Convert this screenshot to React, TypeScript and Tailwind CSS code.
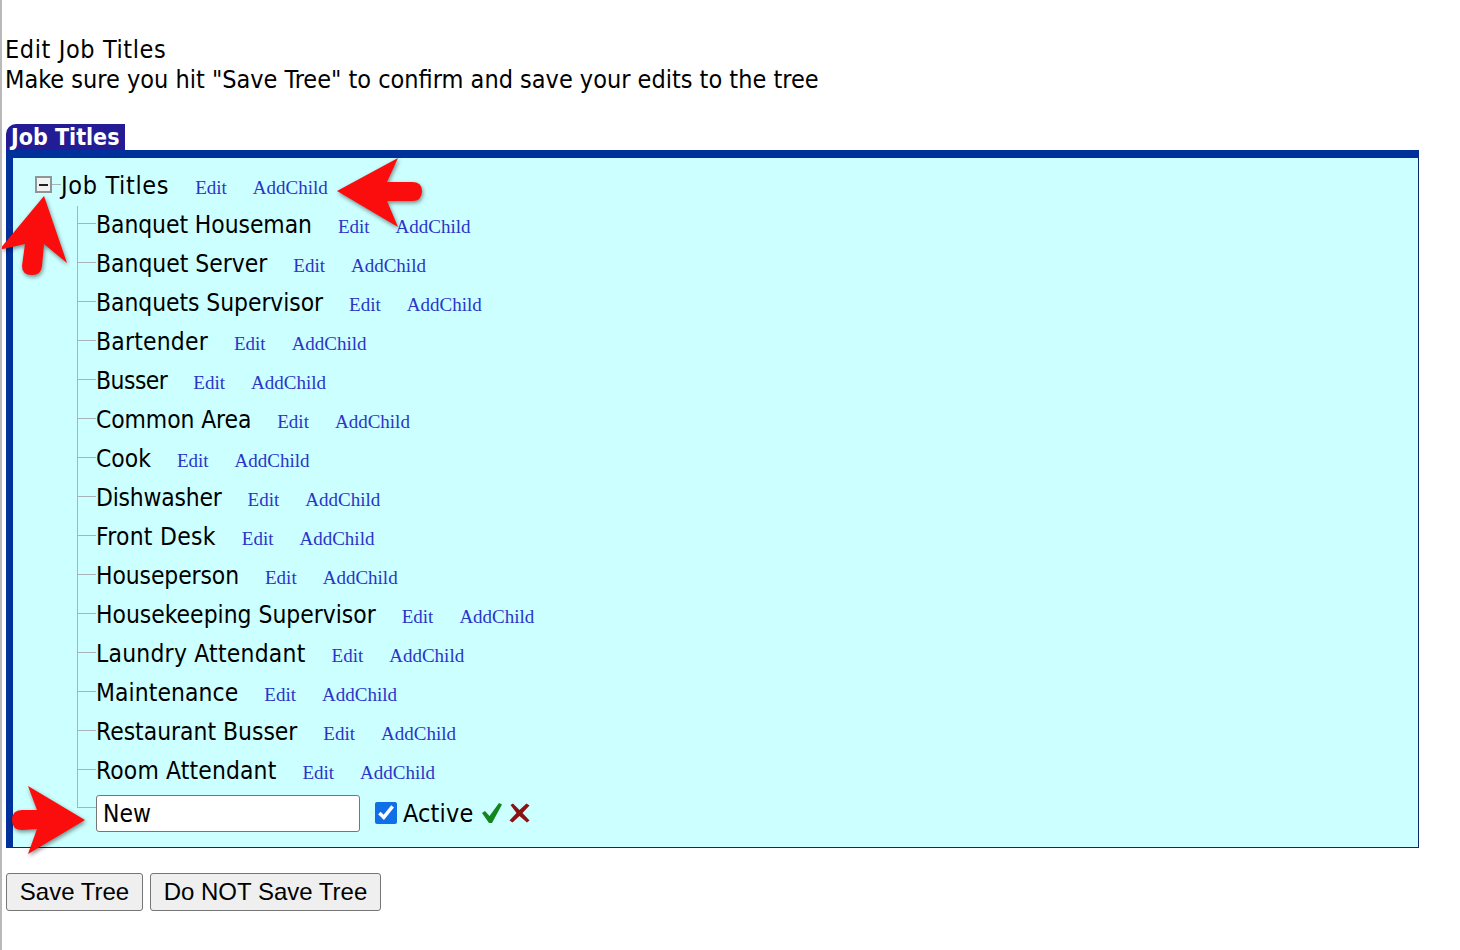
import React from "react";

const font = { fontFamily: '"DejaVu Sans", sans-serif', fontStretch: "condensed" } as React.CSSProperties;

const rows: { name: string; spacing: number }[] = [
  { name: "Banquet Houseman", spacing: -0.06 },
  { name: "Banquet Server", spacing: 0 },
  { name: "Banquets Supervisor", spacing: -0.05 },
  { name: "Bartender", spacing: 0.22 },
  { name: "Busser", spacing: -0.5 },
  { name: "Common Area", spacing: -0.09 },
  { name: "Cook", spacing: 0 },
  { name: "Dishwasher", spacing: -0.2 },
  { name: "Front Desk", spacing: 0.3 },
  { name: "Houseperson", spacing: -0.09 },
  { name: "Housekeeping Supervisor", spacing: 0 },
  { name: "Laundry Attendant", spacing: 0.24 },
  { name: "Maintenance", spacing: 0.09 },
  { name: "Restaurant Busser", spacing: 0 },
  { name: "Room Attendant", spacing: 0.14 },
];

function Links() {
  return (
    <>
      <a className="ml-[26px] text-[19px] leading-[22px] mt-[3px] text-[#2a35c8] font-['Liberation_Serif',serif]">Edit</a>
      <a className="ml-[26px] text-[19px] leading-[22px] mt-[3px] text-[#2a35c8] font-['Liberation_Serif',serif]">AddChild</a>
    </>
  );
}

function Connector({ top, last }: { top: number; last?: boolean }) {
  return (
    <div className="flex flex-col self-stretch w-[19px] shrink-0">
      <div className="border-l border-b border-[#a9b4b8]" style={{ height: top }} />
      {!last && <div className="flex-1 border-l border-[#a9b4b8]" />}
    </div>
  );
}

function Arrows() {
  const red = "#fb0d0d";
  return (
    <svg
      className="absolute left-0 top-0 pointer-events-none drop-shadow-[1px_2px_2px_rgba(0,0,0,0.45)]"
      width={1460}
      height={950}
      viewBox="0 0 1460 950"
    >
      <path
        fill={red}
        d="M335 191 L396 158 L385 182 L410 182 Q420 182 420 191 Q420 201 410 201 L385 201 L396 227 Z"
      />
      <path
        fill={red}
        d="M42 196 L65 263 L42 244 L40 266 Q39 275 30 275 Q20 275 20 266 L23 244 L-3 250 Z"
      />
      <path
        fill={red}
        d="M83 820 L26 786 L35 810 L20 810 Q10 810 10 820 Q10 830 20 830 L35 829 L26 854 Z"
      />
    </svg>
  );
}

export default function App() {
  return (
    <div className="relative h-[950px] overflow-hidden bg-white border-l-2 border-[#b9b9b9] pl-1 pt-[35px] text-black" style={font}>
      <p className="text-[25px] leading-[30px] tracking-[0.6px] -ml-px">Edit Job Titles</p>
      <p className="text-[25px] leading-[30px] -ml-px">Make sure you hit "Save Tree" to confirm and save your edits to the tree</p>

      <div className="mt-[29px] w-[119px] h-[26px] bg-[#231c94] rounded-tl-[10px] pl-[5px] text-white font-bold text-[23px] leading-[26px]">
        Job Titles
      </div>

      <section className="w-[1413px] h-[698px] bg-[#ccffff] border-t-[8px] border-l-[7px] border-r border-b border-t-[#00309a] border-l-[#00309a] border-r-[#0b2a6e] border-b-[#0b2a6e] pt-[9px] pl-[22px]">
        <div className="flex items-center h-[39px]">
          <span className="w-[17px] h-[17px] border-2 border-[#8f9698] bg-[#f2f2f2] flex items-center justify-center mb-[4px]">
            <span className="w-[9px] h-[2px] bg-[#222]" />
          </span>
          <span className="w-[9px] h-px bg-[#a9b4b8] mb-[4px]" />
          <span className="text-[25px] leading-[38px] mb-[2px] tracking-[0.65px]">Job Titles</span>
          <Links />
        </div>

        <div className="ml-[42px]">
          {rows.map(({ name, spacing }) => (
            <div key={name} className="flex h-[39px]">
              <Connector top={18} />
              <div className="flex items-center">
                <span className="text-[24.4px] leading-[38px] mb-[1px]" style={{ letterSpacing: spacing }}>{name}</span>
                <Links />
              </div>
            </div>
          ))}
          <div className="flex h-[47px]">
            <Connector top={17} last />
            <div className="flex items-start pt-[4px]">
              <input
                readOnly
                value="New"
                className="w-[264px] h-[37px] bg-white border border-[#767676] rounded-[3px] px-[6px] text-[24.4px] outline-none"
                style={font}
              />
              <input type="checkbox" readOnly checked className="ml-[15px] mt-[7px] w-[22px] h-[22px] accent-[#0f6fe8]" />
              <span className="ml-[6px] text-[25px] leading-[37px] tracking-[0.15px]">Active</span>
              <svg className="ml-[9px] mt-[8px]" width="20" height="20" viewBox="0 0 20 20">
                <path d="M0 10 L3 8 L7.5 13 L17 0 L20 1.5 L10 20 L7 20 Z" fill="#12851f" />
              </svg>
              <svg className="ml-[7px] mt-[8px]" width="21" height="20" viewBox="0 0 21 20">
                <path d="M1.5 2 L4 0.5 L10.5 7 L17.5 0.5 L20.5 2.5 L13.5 10 L20.5 17.5 L18 19.5 L10.5 13 L3.5 19.5 L0.5 17.5 L7.5 10 Z" fill="#8a1212" />
              </svg>
            </div>
          </div>
        </div>
      </section>

      <div className="flex gap-[7px] mt-[25px] font-['Liberation_Sans',sans-serif]">
        <button className="w-[137px] h-[38px] bg-[#efefef] border border-[#767676] rounded-[3px] text-[24px] text-black">Save Tree</button>
        <button className="w-[231px] h-[38px] bg-[#efefef] border border-[#767676] rounded-[3px] text-[24px] text-black">Do NOT Save Tree</button>
      </div>

      <Arrows />
    </div>
  );
}
